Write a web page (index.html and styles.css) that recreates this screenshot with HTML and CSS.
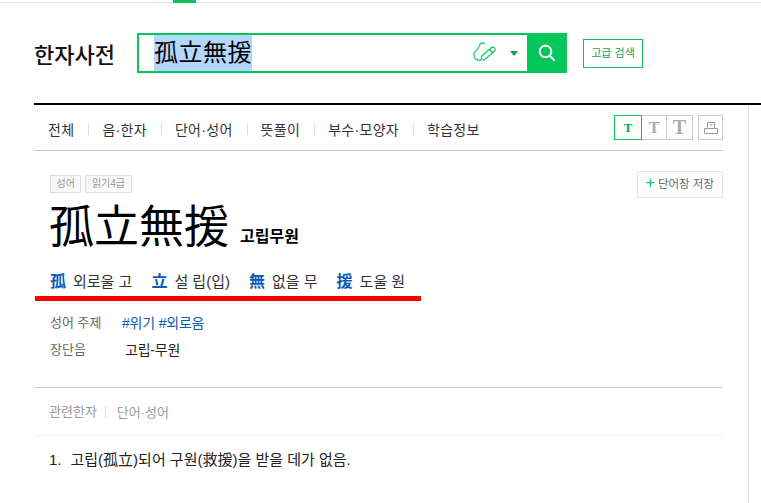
FILE: index.html
```html
<!DOCTYPE html>
<html lang="ko">
<head>
    <meta charset="UTF-8">
    <title>한자사전</title>
    <link rel="stylesheet" href="styles.css">
</head>
<body>
    <div class="topbar"><span class="topbar-tab"></span></div>

    <header class="header">
        <h1 class="logo">한자사전</h1>
        <div class="search">
            <div class="search-input">
                <span class="search-text">孤立無援</span>
                <svg class="pen-icon" width="26" height="22" viewBox="0 0 26 22" fill="none" stroke="#03c75a" stroke-width="1.1">
                    <path d="M12 1.500c-2.500-1.200-5-.5-5.500 2C6 6 5 7 3.500 8.200 1 10 .5 13 1.500 15c1 2.500 4 3.500 7 3"/>
                    <path d="M9.500 13.500L18 6c1.200-1 2.500-1 3.500-.2 1 1 1 2.200 0 3.200l-8.500 7.500c-1.500 1.200-3.300 1.700-4.300.9-.9-.9-.7-2.600.8-3.900z"/>
                    <path d="M16.500 7.500l3.700 3.500"/>
                </svg>
                <span class="caret"></span>
            </div>
            <button class="search-btn">
                <svg width="18" height="18" viewBox="0 0 18 18" fill="none" stroke="#fff" stroke-width="2">
                    <circle cx="7.500" cy="7.500" r="5.800"/>
                    <path d="M11.800 11.800l4.800 4.800"/>
                </svg>
            </button>
        </div>
        <a class="advanced">고급 검색</a>
    </header>

    <div class="page">
        <main class="content">
            <div class="tabs">
                <ul class="tab-list">
                    <li>전체</li>
                    <li>음·한자</li>
                    <li>단어·성어</li>
                    <li>뜻풀이</li>
                    <li>부수·모양자</li>
                    <li>학습정보</li>
                </ul>
                <div class="tools">
                    <span class="size-btn size-on">T</span>
                    <span class="size-btn size-md">T</span>
                    <span class="size-btn size-lg">T</span>
                    <span class="print-btn">
                        <svg width="14" height="14" viewBox="0 0 14 14" fill="none" stroke="#999" stroke-width="1">
                            <path d="M3.500 7.500v-6h7v6M.5 7.500h13v5H.5zM5.500 4h3"/>
                        </svg>
                    </span>
                </div>
            </div>

            <section class="entry">
                <div class="entry-top">
                    <div class="badges">
                        <span class="badge">성어</span>
                        <span class="badge">읽기4급</span>
                    </div>
                    <a class="save-btn"><span class="plus">+</span>단어장 저장</a>
                </div>
                <div class="entry-title">
                    <span class="hanja">孤立無援</span>
                    <span class="reading">고립무원</span>
                </div>
                <ul class="chars">
                    <li><b>孤</b>외로울 고</li>
                    <li><b>立</b>설 립(입)</li>
                    <li><b>無</b>없을 무</li>
                    <li><b>援</b>도울 원</li>
                </ul>
                <dl class="info">
                    <div class="info-row">
                        <dt>성어 주제</dt>
                        <dd class="tags">#위기 #외로움</dd>
                    </div>
                    <div class="info-row">
                        <dt>장단음</dt>
                        <dd>고립-무원</dd>
                    </div>
                </dl>
            </section>

            <section class="related">
                <div class="related-head">
                    <span class="related-title">관련한자</span>
                    <span class="related-sub">단어·성어</span>
                </div>
                <p class="meaning"><span class="num">1.</span>고립(孤立)되어 구원(救援)을 받을 데가 없음.</p>
            </section>

            <div class="red-mark"></div>
        </main>
    </div>
</body>
</html>
```

FILE: styles.css
```css
* {
    box-sizing: border-box;
}

body {
    margin: 0;
    height: 503px;
    overflow: hidden;
    background: #fff;
    color: #000;
    font-family: "Liberation Sans", "Noto Sans CJK KR", sans-serif;
}

ul, dl, dd, h1, p {
    margin: 0;
    padding: 0;
}

ul {
    list-style: none;
}

.topbar {
    height: 3px;
    border-bottom: 1px solid #e4e4e4;
    padding-left: 173px;
}

.topbar-tab {
    display: block;
    width: 23px;
    height: 3px;
    background: #03c75a;
}

.header {
    display: flex;
    align-items: center;
    height: 102px;
    margin-left: 34px;
    border-bottom: 2px solid #000;
}

.logo {
    width: 103px;
    font-size: 22px;
    font-weight: 500;
    color: #111;
}

.search {
    display: flex;
    width: 430px;
    height: 40px;
}

.search-input {
    flex: 1;
    display: flex;
    align-items: center;
    border: 2px solid #03c75a;
    border-right: 0;
    padding-left: 15px;
}

.search-text {
    width: 98px;
    height: 36px;
    line-height: 36px;
    font-size: 24px;
    letter-spacing: 0.5px;
    background: #b3d7ff;
    white-space: nowrap;
}

.pen-icon {
    margin-left: 221px;
}

.caret {
    margin-left: 11px;
    border: 4px solid transparent;
    border-top: 5px solid #03a94d;
    border-bottom: 0;
}

.search-btn {
    display: flex;
    align-items: center;
    justify-content: center;
    width: 40px;
    border: none;
    padding: 0;
    background: #03c75a;
}

.advanced {
    margin-left: 16px;
    width: 60px;
    height: 29px;
    line-height: 27px;
    border: 1px solid #03c75a;
    font-size: 11px;
    text-align: center;
    color: #1f9e63;
}

.page {
    height: 398px;
    width: 749px;
    padding-left: 34px;
    border-right: 1px solid #e4e4e4;
}

.content {
    position: relative;
    width: 689px;
}

.tabs {
    display: flex;
    justify-content: space-between;
    align-items: center;
    height: 46px;
    padding-left: 14px;
    border-bottom: 1px solid #ccc;
}

.tab-list {
    display: flex;
    padding-top: 3px;
    font-size: 14px;
    letter-spacing: 0.3px;
    color: #333;
}

.tab-list li + li {
    margin-left: 14px;
    padding-left: 14px;
    background: linear-gradient(#ddd, #ddd) left center / 1px 11px no-repeat;
}

.tools {
    display: flex;
}

.size-btn {
    width: 26px;
    height: 25px;
    border: 1px solid #ccc;
    margin-left: -1px;
    font-family: "Liberation Serif", serif;
    font-weight: bold;
    font-size: 13px;
    line-height: 23px;
    text-align: center;
    color: #aaa;
}

.size-on {
    position: relative;
    width: 28px;
    border-color: #03c75a;
    color: #03a94d;
}

.size-md {
    font-size: 16px;
}

.size-lg {
    width: 27px;
    font-size: 20px;
}

.print-btn {
    display: flex;
    align-items: center;
    justify-content: center;
    width: 25px;
    height: 25px;
    margin-left: 5px;
    border: 1px solid #ccc;
}

.entry {
    height: 237px;
    padding: 20px 0 0 16px;
    border-bottom: 1px solid #ccc;
}

.entry-top {
    display: flex;
    justify-content: space-between;
    align-items: flex-start;
}

.badges {
    display: flex;
    gap: 4px;
    padding-top: 4px;
}

.badge {
    height: 18px;
    line-height: 16px;
    padding: 0 5.500px;
    border: 1px solid #ddd;
    background: #f8f8f8;
    font-size: 10px;
    color: #999;
}

.save-btn {
    height: 27px;
    line-height: 25px;
    padding: 0 8px;
    border: 1px solid #e4e4e4;
    font-size: 11.500px;
    color: #666;
}

.plus {
    margin-right: 3px;
    font-size: 16px;
    line-height: 1;
    color: #03c75a;
}

.entry-title {
    display: flex;
    align-items: flex-end;
    gap: 11px;
    margin-top: 3px;
    margin-left: -1px;
    height: 54px;
}

.hanja {
    font-size: 45px;
    line-height: 54px;
}

.reading {
    padding-bottom: 8px;
    font-size: 16px;
    font-weight: bold;
}

.chars {
    display: flex;
    margin-top: 13px;
    font-size: 15px;
    color: #333;
}

.chars li {
    margin-right: 19px;
}

.chars b {
    margin-right: 7px;
    font-size: 16px;
    color: #0b5cb5;
}

.info {
    margin-top: 16px;
    font-size: 13px;
}

.info-row {
    display: flex;
    height: 27px;
    align-items: center;
}

.info-row dt {
    width: 75px;
    color: #666;
}

.info-row dd {
    font-size: 14px;
    letter-spacing: -0.2px;
    color: #222;
}

.tags {
    margin-left: -3px;
    color: #0b5cb5 !important;
}

.related-head {
    display: flex;
    align-items: center;
    height: 48px;
    margin-left: 2px;
    padding-left: 13px;
    border-bottom: 1px solid #eee;
    font-size: 13px;
    color: #999;
}

.related-title {
    padding-right: 8px;
    margin-right: 11px;
    border-right: 1px solid #ddd;
    line-height: 12px;
}

.meaning {
    padding: 12px 0 0 15px;
    font-size: 15px;
    color: #222;
}

.num {
    margin-right: 9px;
}

/* annotation drawn over the entry */
.red-mark {
    position: absolute;
    left: 1px;
    top: 191px;
    width: 386px;
    height: 5px;
    background: #f00;
}
```
